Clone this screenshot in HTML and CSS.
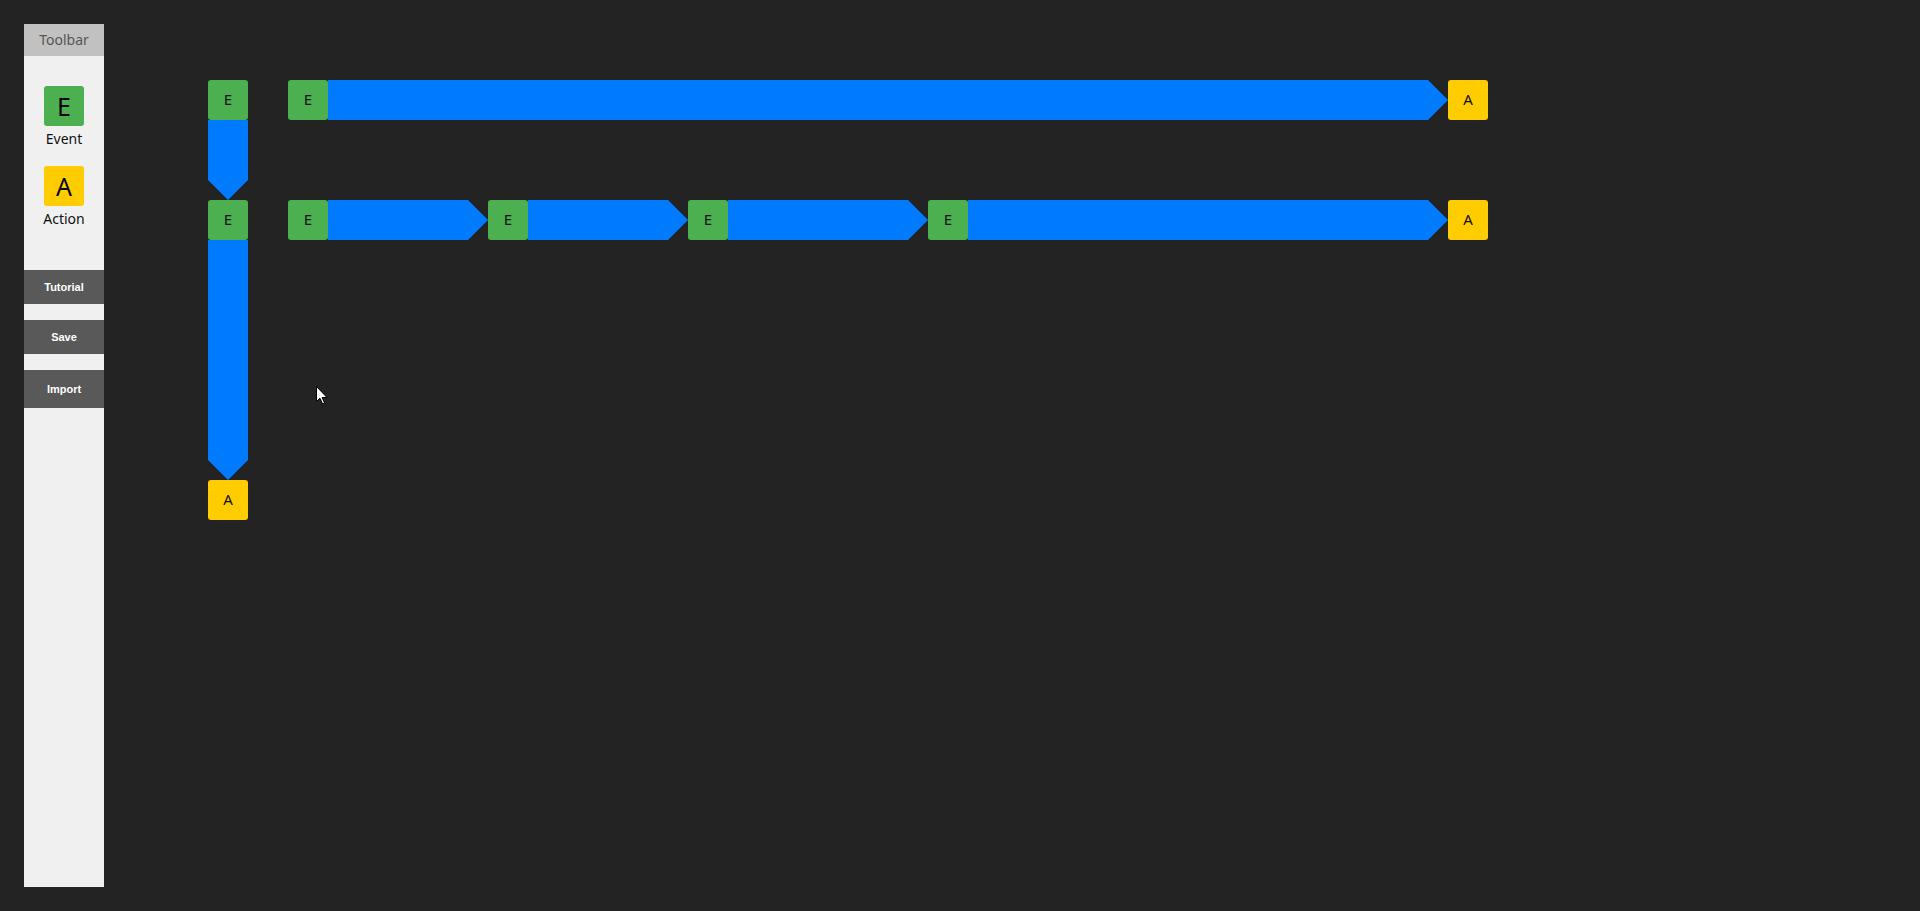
FILE: index.html
```html
<!DOCTYPE html>
<html>
<head>
<meta charset="utf-8">
<title>Flow Editor</title>
<link rel="stylesheet" href="styles.css">
</head>
<body>
<div class="app">
  <aside class="toolbar">
    <div class="toolbar-header">Toolbar</div>
    <div class="tool-items">
      <div class="tool-item">
        <div class="tool-icon event">E</div>
        <div class="tool-label">Event</div>
      </div>
      <div class="tool-item">
        <div class="tool-icon action">A</div>
        <div class="tool-label">Action</div>
      </div>
    </div>
    <div class="tool-buttons">
      <div class="tool-btn">Tutorial</div>
      <div class="tool-btn">Save</div>
      <div class="tool-btn tall">Import</div>
    </div>
  </aside>
  <main class="canvas">
    <div class="chain vertical col-main">
      <div class="node event">E</div>
      <div class="arrow down h80"></div>
      <div class="node event">E</div>
      <div class="arrow down h240"></div>
      <div class="node action">A</div>
    </div>
    <div class="chain horizontal row-1">
      <div class="node event">E</div>
      <div class="arrow right w1120"></div>
      <div class="node action">A</div>
    </div>
    <div class="chain horizontal row-2">
      <div class="node event">E</div>
      <div class="arrow right w160"></div>
      <div class="node event">E</div>
      <div class="arrow right w160"></div>
      <div class="node event">E</div>
      <div class="arrow right w200"></div>
      <div class="node event">E</div>
      <div class="arrow right w480"></div>
      <div class="node action">A</div>
    </div>
    <svg class="cursor" width="12" height="19" viewBox="0 0 12 19">
      <path d="M0.5 0.5 L0.5 15.5 L4 12.2 L6.6 18 L8.6 17.1 L6.1 11.5 L11 11.5 Z" fill="#ffffff" stroke="#000000" stroke-width="1"/>
    </svg>
  </main>
</div>
</body>
</html>
```

FILE: styles.css
```css
* { box-sizing: border-box; }

html, body {
  margin: 0;
  padding: 0;
  height: 100%;
}

body {
  background: #232323;
  font-family: "Noto Sans", "Open Sans", sans-serif;
  overflow: hidden;
}

.app {
  display: flex;
  height: 100vh;
  padding: 24px;
}

.toolbar {
  width: 80px;
  flex: 0 0 80px;
  background: #f0f0f0;
  display: flex;
  flex-direction: column;
}

.toolbar-header {
  height: 32px;
  background: #c1c1c1;
  color: #555555;
  font-size: 14px;
  line-height: 32px;
  text-align: center;
}

.tool-items {
  padding-top: 30px;
  display: flex;
  flex-direction: column;
  gap: 15px;
}

.tool-item {
  display: flex;
  flex-direction: column;
  align-items: center;
}

.tool-icon {
  width: 40px;
  height: 40px;
  border-radius: 3px;
  display: flex;
  align-items: center;
  justify-content: center;
  font-size: 25px;
  color: #000;
}

.tool-label {
  font-size: 14px;
  line-height: 24px;
  padding-top: 1px;
  color: #111;
}

.event { background: #4caf50; }
.action { background: #ffcc00; }

.tool-buttons {
  margin-top: 39px;
  display: flex;
  flex-direction: column;
  gap: 16px;
}

.tool-btn {
  height: 34px;
  background: #595959;
  color: #ffffff;
  font-family: "Liberation Sans", Arial, sans-serif;
  font-weight: bold;
  font-size: 11px;
  display: flex;
  align-items: center;
  justify-content: center;
}

.tool-btn.tall { height: 38px; }

.canvas {
  flex: 1;
  position: relative;
}

.chain {
  position: absolute;
  display: flex;
}

.chain.vertical { flex-direction: column; }
.chain.horizontal { flex-direction: row; }

.col-main { left: 104px; top: 56px; }
.row-1 { left: 184px; top: 56px; }
.row-2 { left: 184px; top: 176px; }

.node {
  width: 40px;
  height: 40px;
  flex: 0 0 40px;
  border-radius: 3px;
  display: flex;
  align-items: center;
  justify-content: center;
  font-size: 15px;
  padding-bottom: 2px;
  color: #111;
}

.arrow {
  background: #007bff;
  flex: none;
}

.arrow.right {
  height: 40px;
  clip-path: polygon(0 0, calc(100% - 20px) 0, 100% 50%, calc(100% - 20px) 100%, 0 100%);
}

.arrow.down {
  width: 40px;
  clip-path: polygon(0 0, 100% 0, 100% calc(100% - 20px), 50% 100%, 0 calc(100% - 20px));
}

.w160 { width: 160px; }
.w200 { width: 200px; }
.w480 { width: 480px; }
.w1120 { width: 1120px; }
.h80 { height: 80px; }
.h240 { height: 240px; }

.cursor {
  position: absolute;
  left: 212px;
  top: 362px;
}
```
